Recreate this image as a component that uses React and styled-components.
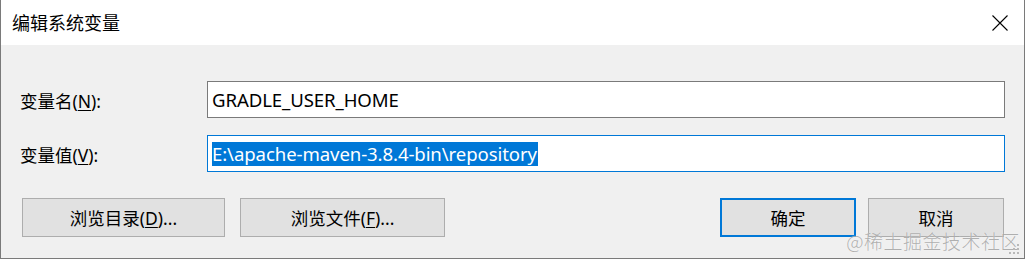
import React from 'react';
import styled, { createGlobalStyle } from 'styled-components';

const Global = createGlobalStyle`
  html, body {
    margin: 0;
    padding: 0;
    background: #ffffff;
  }
  body {
    font-family: "Noto Sans", "Noto Sans CJK SC", sans-serif;
  }
`;

const cjk = `"Noto Sans", "Noto Sans CJK SC", sans-serif`;

const Window = styled.div`
  position: relative;
  box-sizing: border-box;
  width: 1025px;
  height: 259px;
  border: 1px solid #7a7a7a;
  border-top: none;
  background: #f0f0f0;
  display: flex;
  flex-direction: column;
  overflow: hidden;
`;

const TitleBar = styled.div`
  height: 45px;
  flex: none;
  background: #ffffff;
  display: flex;
  align-items: center;
  justify-content: space-between;
  padding: 0 0 0 11px;
`;

const Title = styled.span`
  font-family: "Noto Sans CJK SC", sans-serif;
  font-size: 18px;
  color: #000;
  line-height: 1;
  margin-top: -1px;
`;

const CloseButton = styled.div`
  width: 46px;
  height: 45px;
  margin-right: 1px;
  display: flex;
  align-items: center;
  justify-content: center;
`;

const Body = styled.div`
  flex: 1;
  padding: 36px 19px 0 19px;
  display: flex;
  flex-direction: column;
`;

const Fields = styled.div`
  display: grid;
  grid-template-columns: 187px 1fr;
  row-gap: 17px;
  align-items: center;
`;

const Label = styled.label`
  font-family: ${cjk};
  font-size: 17.5px;
  color: #000;
  padding-top: 1px;

  u {
    text-underline-offset: 2px;
  }
`;

const Field = styled.div`
  box-sizing: border-box;
  height: 37px;
  background: #ffffff;
  border: 1px solid ${(p) => (p.$focused ? '#0078d7' : '#7a7a7a')};
  display: flex;
  align-items: center;
  padding: 0 3px 0 4px;
  font-family: ${cjk};
  font-size: 18.6px;
  letter-spacing: -0.1px;
  color: #000;
  white-space: nowrap;
`;

const Selected = styled.span`
  background: #0078d7;
  color: #ffffff;
  line-height: 24px;
  padding-right: 1px;
`;

const Buttons = styled.div`
  display: flex;
  align-items: flex-start;
  margin-top: 26px;
  padding-left: 2px;
`;

const Group = styled.div`
  display: flex;
  gap: ${(p) => p.$gap}px;
  margin-left: ${(p) => (p.$push ? 'auto' : '0')};
  margin-right: ${(p) => (p.$push ? '1px' : '0')};
`;

const Button = styled.button`
  box-sizing: border-box;
  width: ${(p) => p.$w}px;
  height: 39px;
  background: #e1e1e1;
  border: ${(p) => (p.$default ? '2px solid #0078d7' : '1px solid #adadad')};
  font-family: ${cjk};
  font-size: 17.5px;
  color: #000;
  padding: 0;
  display: flex;
  align-items: center;
  justify-content: center;

  u {
    text-underline-offset: 2px;
  }
`;

const Watermark = styled.div`
  position: absolute;
  right: 4px;
  bottom: 4px;
  font-family: "Noto Sans CJK SC", sans-serif;
  font-weight: 300;
  font-size: 19px;
  letter-spacing: 0.5px;
  color: rgba(150, 150, 150, 0.75);
  text-shadow: 0 0 1px rgba(255, 255, 255, 0.8);
  pointer-events: none;
`;

const Grip = styled.svg`
  position: absolute;
  right: 3px;
  bottom: 2px;
`;

const CloseIcon = () => (
  <svg width="16" height="16" viewBox="0 0 16 16">
    <path d="M0.5 0.5 L15.5 15.5 M15.5 0.5 L0.5 15.5" stroke="#000" strokeWidth="1.1" fill="none" />
  </svg>
);

const App = () => {
  return (
    <>
      <Global />
      <Window>
        <TitleBar>
          <Title>编辑系统变量</Title>
          <CloseButton>
            <CloseIcon />
          </CloseButton>
        </TitleBar>

        <Body>
          <Fields>
            <Label>
              变量名(<u>N</u>):
            </Label>
            <Field>GRADLE_USER_HOME</Field>

            <Label>
              变量值(<u>V</u>):
            </Label>
            <Field $focused>
              <Selected>E:\apache-maven-3.8.4-bin\repository</Selected>
            </Field>
          </Fields>

          <Buttons>
            <Group $gap={15}>
              <Button $w={203}>
                浏览目录(<u>D</u>)...
              </Button>
              <Button $w={205}>
                浏览文件(<u>F</u>)...
              </Button>
            </Group>
            <Group $gap={12} $push>
              <Button $w={136} $default>
                确定
              </Button>
              <Button $w={136}>取消</Button>
            </Group>
          </Buttons>
        </Body>

        <Watermark>@稀土掘金技术社区</Watermark>
        <Grip width="12" height="12" viewBox="0 0 12 12">
          <rect x="8" y="0" width="2" height="2" fill="#b8b8b8" />
          <rect x="4" y="4" width="2" height="2" fill="#b8b8b8" />
          <rect x="8" y="4" width="2" height="2" fill="#b8b8b8" />
          <rect x="0" y="8" width="2" height="2" fill="#b8b8b8" />
          <rect x="4" y="8" width="2" height="2" fill="#b8b8b8" />
          <rect x="8" y="8" width="2" height="2" fill="#b8b8b8" />
        </Grip>
      </Window>
    </>
  );
};

export default App;
